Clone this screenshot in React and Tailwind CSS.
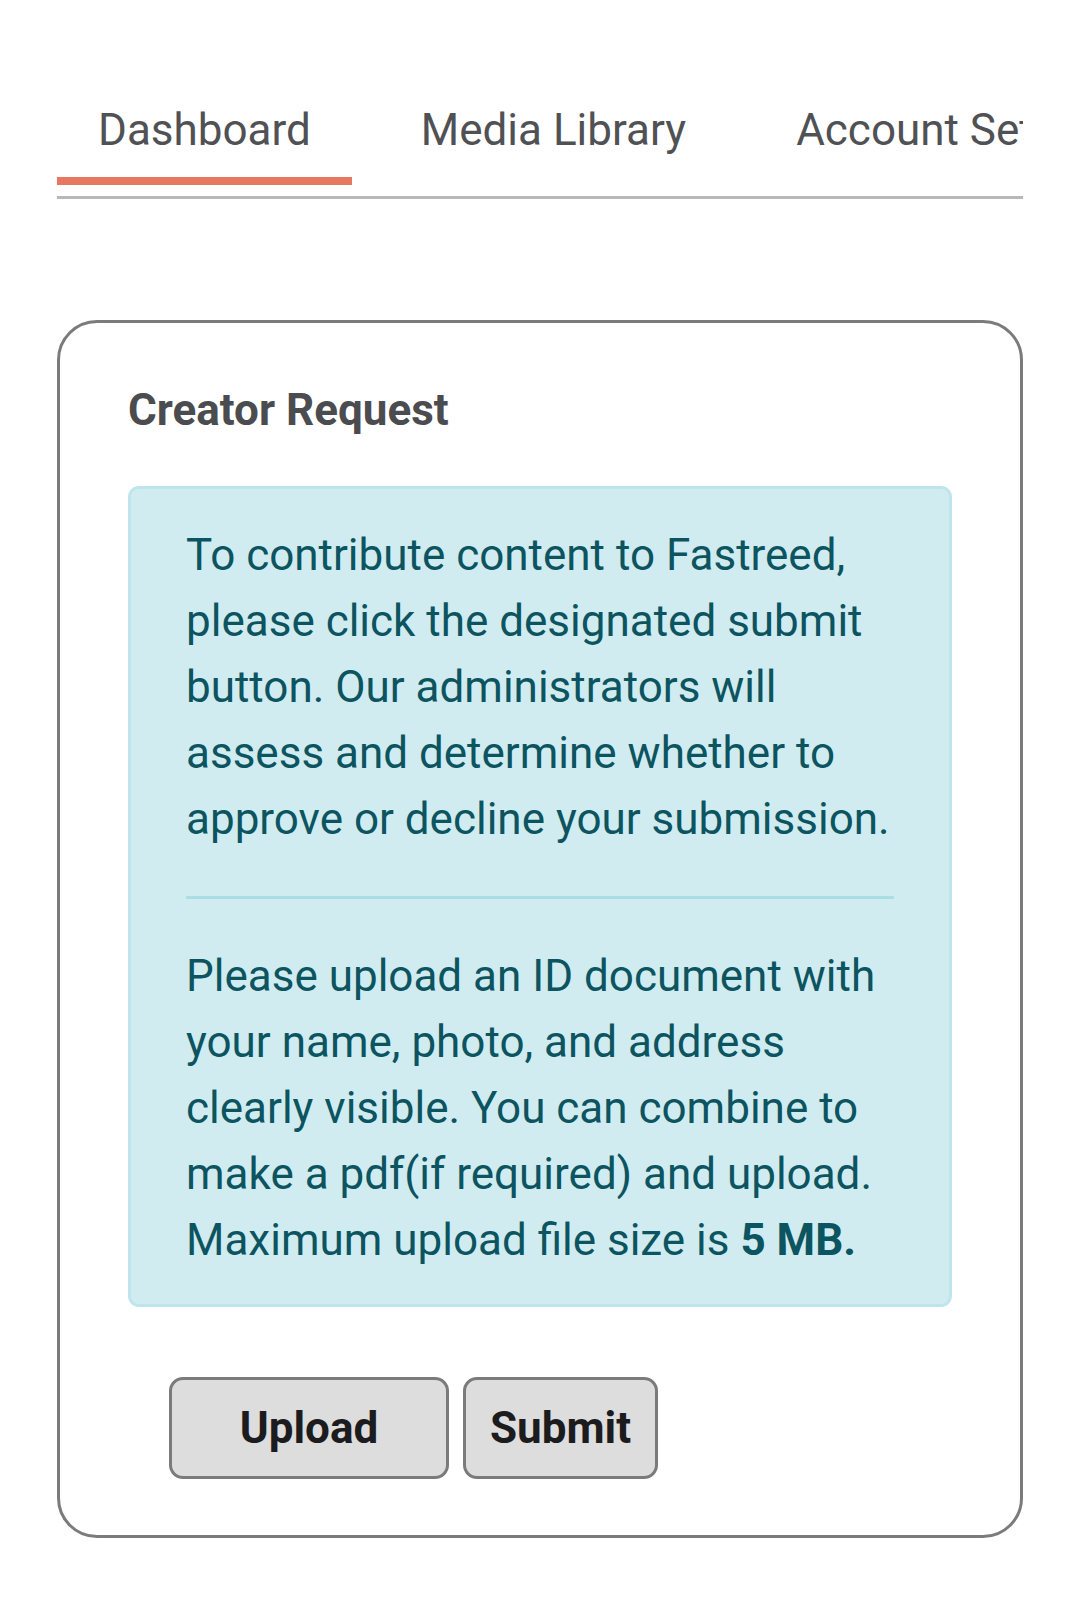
export default function App() {
  const font = { fontFamily: 'Roboto, "Noto Sans", sans-serif' };
  return (
    <div className="w-[1080px] min-h-[1620px] bg-white" style={font}>
      <div className="mx-[57px] pt-[104px]">
        <div className="flex overflow-hidden whitespace-nowrap border-b-[3px] border-[#b9b9b9] pb-[11px]">
          <div className="shrink-0 mr-[28px] px-[41px] pb-[21px] border-b-[8px] border-[#e8775f] text-[44px] leading-[52px] text-[#505155]">
            Dashboard
          </div>
          <div className="shrink-0 mr-[28px] px-[41px] pb-[21px] border-b-[8px] border-transparent text-[44px] leading-[52px] text-[#505155]">
            Media Library
          </div>
          <div className="shrink-0 mr-[28px] px-[41px] pb-[21px] border-b-[8px] border-transparent text-[44px] leading-[52px] text-[#505155]">
            Account Settings
          </div>
        </div>
      </div>

      <div className="mx-[57px] mt-[121px] border-[3px] border-[#7b7b7b] rounded-[40px] px-[68px] pt-[61px] pb-[56px]">
        <h2 className="text-[44px] leading-[52px] font-bold text-[#4b4c50] mb-[50px]">
          Creator Request
        </h2>
        <div className="border-[3px] border-[#bee5eb] bg-[#d1ecf1] rounded-[11px] px-[55px] pt-[33px] pb-[31px] text-[#0c5460] text-[44px] leading-[66px]">
          <p>
            To contribute content to Fastreed, please click the designated submit button. Our administrators will assess and determine whether to approve or decline your submission.
          </p>
          <hr className="my-[44px] border-0 border-t-[3px] border-[#abdde5]" />
          <p>
            Please upload an ID document with your name, photo, and address clearly visible. You can combine to make a pdf(if required) and upload. Maximum upload file size is <b className="font-bold">5 MB.</b>
          </p>
        </div>
        <div className="flex gap-[14px] mt-[70px] ml-[41px]">
          <button className="w-[280px] h-[102px] flex items-center justify-center bg-[#dddddd] border-[3px] border-[#7b7b7b] rounded-[14px] text-[44px] font-bold text-[#1c1c1e]">
            Upload
          </button>
          <button className="w-[195px] h-[102px] flex items-center justify-center bg-[#dddddd] border-[3px] border-[#7b7b7b] rounded-[14px] text-[44px] font-bold text-[#1c1c1e]">
            Submit
          </button>
        </div>
      </div>
    </div>
  );
}
